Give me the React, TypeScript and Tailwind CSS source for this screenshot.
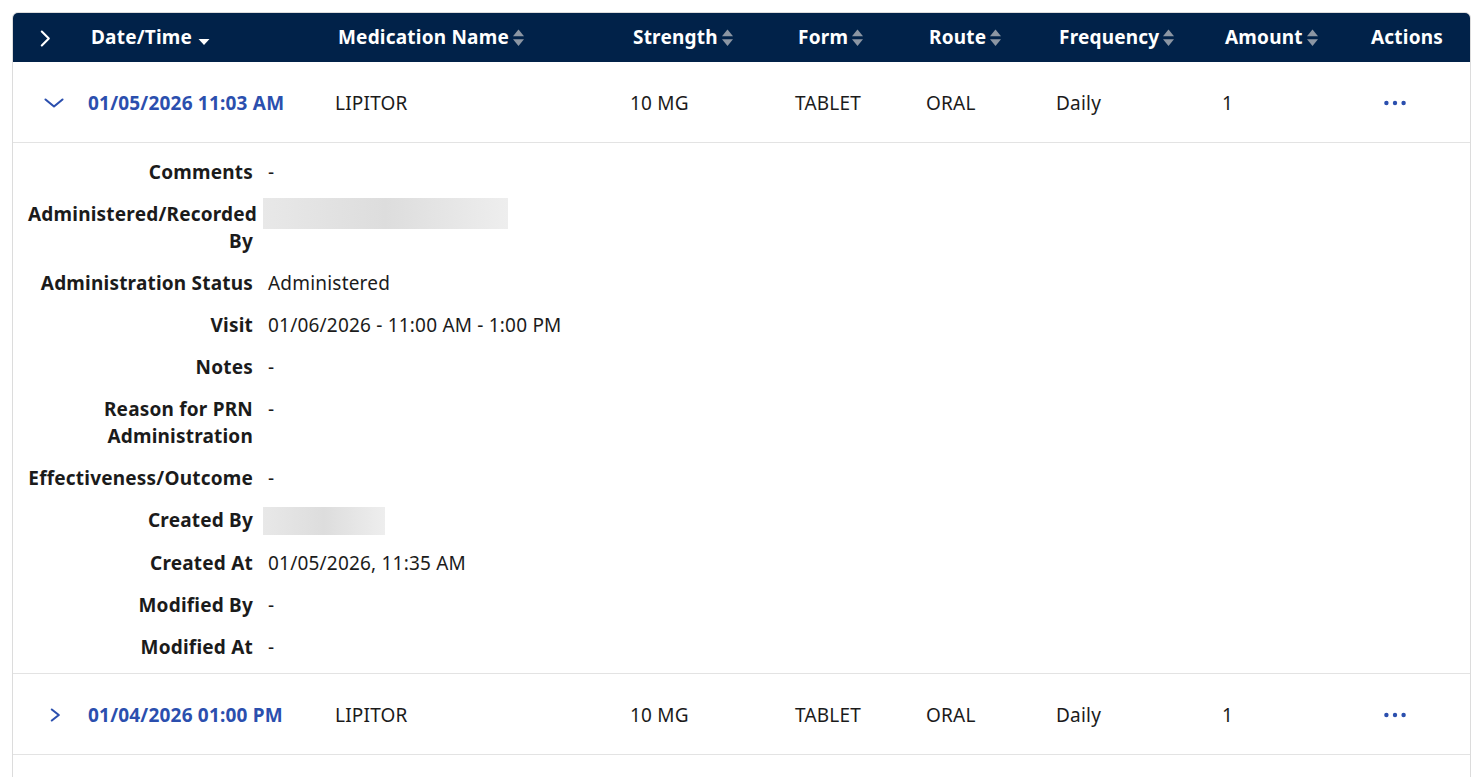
import React from "react";

const FONT = { fontFamily: '"Noto Sans", "Open Sans", Arial, sans-serif', letterSpacing: "0.2px" };

const SortBoth = () => (
  <svg width="11" height="18" viewBox="0 0 11 18" className="ml-[4px] shrink-0">
    <path d="M5.5 0.5 L11 7.2 L0 7.2 Z" fill="#8c96a3" />
    <path d="M0 10.3 L11 10.3 L5.5 17 Z" fill="#8c96a3" />
  </svg>
);

const SortDown = () => (
  <svg width="12" height="18" viewBox="0 0 12 18" className="ml-[6px] shrink-0">
    <path d="M0.5 10 L11.5 10 L6 16 Z" fill="#ffffff" />
  </svg>
);

const ChevronRight = ({ color, h = 14 }: { color: string; h?: number }) => (
  <svg width="11" height={h} viewBox={`0 0 11 ${h}`} fill="none">
    <path
      d={`M1.8 1.5 L8.8 ${h / 2} L1.8 ${h - 1.5}`}
      stroke={color}
      strokeWidth="2.1"
      strokeLinecap="round"
      strokeLinejoin="round"
    />
  </svg>
);

const ChevronDown = () => (
  <svg width="20" height="10" viewBox="0 0 20 10" fill="none">
    <path
      d="M1.5 1.5 L10 8.5 L18.5 1.5"
      stroke="#2b4fae"
      strokeWidth="2.1"
      strokeLinecap="round"
      strokeLinejoin="round"
    />
  </svg>
);

const Dots = () => (
  <svg width="22" height="6" viewBox="0 0 22 6">
    <circle cx="2.4" cy="3" r="2.2" fill="#2b4fae" />
    <circle cx="11" cy="3" r="2.2" fill="#2b4fae" />
    <circle cx="19.6" cy="3" r="2.2" fill="#2b4fae" />
  </svg>
);

const GRID =
  "grid grid-cols-[62px_247px_295px_165px_131px_130px_166px_146px_1fr]";

type Row = {
  date: string;
  name: string;
  strength: string;
  form: string;
  route: string;
  freq: string;
  amount: string;
};

const rows: Row[] = [
  { date: "01/05/2026 11:03 AM", name: "LIPITOR", strength: "10 MG", form: "TABLET", route: "ORAL", freq: "Daily", amount: "1" },
  { date: "01/04/2026 01:00 PM", name: "LIPITOR", strength: "10 MG", form: "TABLET", route: "ORAL", freq: "Daily", amount: "1" },
];

const Blur = ({ w, h, mt }: { w: number; h: number; mt: number }) => (
  <div
    className="ml-[-5px] bg-gradient-to-r from-[#e8e8e8] via-[#dddddd] to-[#eeeeee] blur-[0.6px]"
    style={{ width: w, height: h, marginTop: mt }}
  />
);

const details: { label: string; value?: string; blur?: { w: number; h: number; mt: number } }[] = [
  { label: "Comments", value: "-" },
  { label: "Administered/Recorded By", blur: { w: 245, h: 31, mt: -3.5 } },
  { label: "Administration Status", value: "Administered" },
  { label: "Visit", value: "01/06/2026 - 11:00 AM - 1:00 PM" },
  { label: "Notes", value: "-" },
  { label: "Reason for PRN Administration", value: "-" },
  { label: "Effectiveness/Outcome", value: "-" },
  { label: "Created By", blur: { w: 122, h: 28, mt: 0 } },
  { label: "Created At", value: "01/05/2026, 11:35 AM" },
  { label: "Modified By", value: "-" },
  { label: "Modified At", value: "-" },
];

const Details = () => (
  <div className="flex flex-col gap-[15px] pt-[16px] pb-[12px] border-b border-[#e3e3e3]">
    {details.map((d) => (
      <div key={d.label} className="flex items-start">
        <div className="ml-[15px] w-[225px] shrink-0 text-right font-bold text-[19px] leading-[27px] text-[#1b1b1b]">
          {d.label}
        </div>
        <div className="ml-[15px]">
          {d.blur ? (
            <Blur {...d.blur} />
          ) : (
            <div className="text-[19px] leading-[27px] text-[#1b1b1b]">{d.value}</div>
          )}
        </div>
      </div>
    ))}
  </div>
);

const BodyRow = ({ r, open }: { r: Row; open: boolean }) => (
  <div className={`${GRID} h-[81px] pt-[2px] border-b border-[#e3e3e3] items-center text-[19px] text-[#1b1b1b]`}>
    <div className="flex items-center">
      {open ? (
        <div className="pl-[31px]">
          <ChevronDown />
        </div>
      ) : (
        <div className="pl-[37px]">
          <ChevronRight color="#2b4fae" />
        </div>
      )}
    </div>
    <div className="pl-[13px] font-bold text-[#2b4fae]">{r.date}</div>
    <div className="pl-[13px]">{r.name}</div>
    <div className="pl-[13px]">{r.strength}</div>
    <div className="pl-[13px]">{r.form}</div>
    <div className="pl-[13px]">{r.route}</div>
    <div className="pl-[13px]">{r.freq}</div>
    <div className="pl-[13px]">{r.amount}</div>
    <div className="pl-[29px] flex items-center">
      <Dots />
    </div>
  </div>
);

const Head = ({ label, sort }: { label: string; sort?: "down" | "both" }) => (
  <div className="pl-[16px] flex items-center">
    <span>{label}</span>
    {sort === "down" && <SortDown />}
    {sort === "both" && <SortBoth />}
  </div>
);

export default function App() {
  return (
    <div className="h-screen overflow-hidden bg-white" style={FONT}>
      <div className="pt-[12px] pl-[12px]">
        <div className="w-[1459px] border border-[#dcdcdc] rounded-t-[6px] overflow-hidden bg-white">
          <div className={`${GRID} h-[49px] bg-[#012249] text-white font-bold text-[19px] items-center`}>
            <div className="pl-[27px] flex items-center pt-[1px]">
              <ChevronRight color="#ffffff" h={17} />
            </div>
            <Head label="Date/Time" sort="down" />
            <Head label="Medication Name" sort="both" />
            <Head label="Strength" sort="both" />
            <Head label="Form" sort="both" />
            <Head label="Route" sort="both" />
            <Head label="Frequency" sort="both" />
            <Head label="Amount" sort="both" />
            <Head label="Actions" />
          </div>
          <BodyRow r={rows[0]} open={true} />
          <Details />
          <BodyRow r={rows[1]} open={false} />
          <div className="h-[60px]" />
        </div>
      </div>
    </div>
  );
}
